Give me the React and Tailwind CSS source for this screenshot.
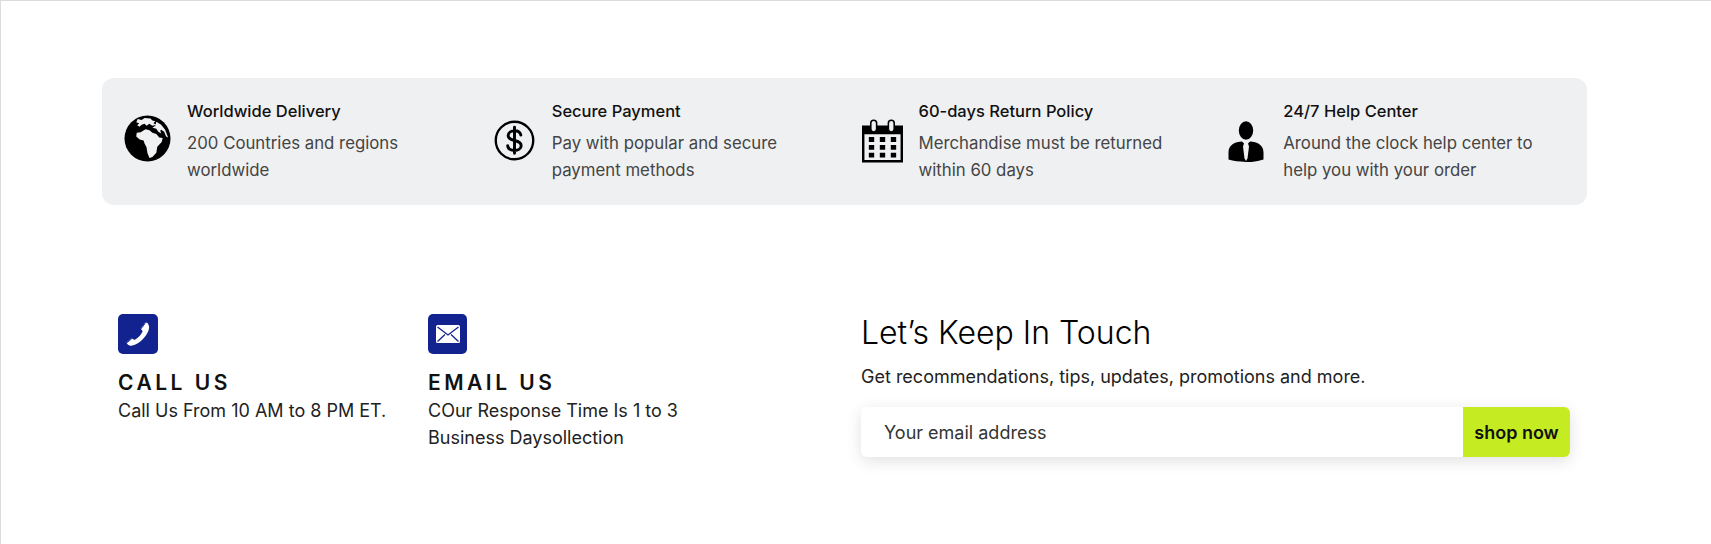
import React from "react";

const Globe = () => (
  <svg viewBox="0 0 48 48" className="w-[47px] h-[47px]">
    <circle cx="24" cy="24" r="23.5" fill="#000" />
    <path fill="#f0f1f3" d="M14 4l4 1 3-2 6 .5 2 2 3 1-2 2 3 1.500-4 1-3-2-3 2-2-2-3 1-2 2-2.500-1.500 2-2-3-1zM33 7l5 3 4 5 3 8-2-1-2-5-3-2-1 1 1 3-3-2-2-3-4-1 3-2z" />
    <path fill="#f0f1f3" d="M17 17.500l5-3 4 1 3 2.500 4 1.500 3 3.500 3.500.5-1 4-4.500 5-1 6-4 4.500-3 1-2-5-1-6-2-4-1-3-4-1-3.500-3 .5-4z" />
  </svg>
);
const Dollar = () => (
  <svg viewBox="0 0 42 42" className="w-[41px] h-[41px]" fill="none" stroke="#000">
    <circle cx="21" cy="21" r="19.200" strokeWidth="2.400" />
    <path strokeWidth="3" strokeLinecap="round" d="M27.500 15.500c-.5-3-3.300-4.500-6.500-4.500-3.500 0-6.500 2-6.500 5 0 3 2.500 4.200 6.500 5 4 .9 6.800 2.200 6.800 5.300 0 3-3 4.900-6.800 4.900-3.500 0-6.500-1.700-7-4.900M21 7.500v26.500" />
  </svg>
);
const Calendar = () => (
  <svg viewBox="0 0 42 44" className="w-[41px] h-[44px]">
    <path fill="#000" d="M0 6h42v38H0z" />
    <path fill="#f0f1f3" d="M2.500 15h37v26.500h-37z" />
    <rect x="9" y="0.800" width="6" height="12" rx="3" fill="#f0f1f3" stroke="#000" strokeWidth="1.600" />
    <rect x="27" y="0.800" width="6" height="12" rx="3" fill="#f0f1f3" stroke="#000" strokeWidth="1.600" />
    <path fill="#000" d="M7 18h5.500v5H7zM18.250 18h5.500v5h-5.500zM29.500 18h5.500v5h-5.500zM7 26h5.500v5H7zM18.250 26h5.500v5h-5.500zM29.500 26h5.500v5h-5.500zM7 34h5.500v5H7zM18.250 34h5.500v5h-5.500zM29.500 34h5.500v5h-5.500z" />
  </svg>
);
const Person = () => (
  <svg viewBox="0 0 36 41" className="w-[36px] h-[41px]">
    <ellipse cx="18" cy="9.500" rx="7.200" ry="9.300" fill="#000" />
    <path fill="#000" d="M14 20.500c-7 .5-13.500 3-13.500 11v7c5 1.500 10.500 2 17.500 2.500s12.500-1 17.500-2.500v-7c0-8-6.500-10.500-13.500-11l-2 2 1 3-1.500 12-1.500 2.500-1.500-2.500-1.500-12 1-3z" />
  </svg>
);
const Phone = () => (
  <svg viewBox="0 0 24 24" className="w-[26px] h-[26px]">
    <path fill="#fff" d="M20.500 1.500c1.800 1.800 2.300 4.500 1.200 7.200-1.200 3-3.300 6.200-6 8.800-2.700 2.700-5.800 4.300-8.800 5.200-2 .5-3.500-.3-5-1.800l-.4-1 4.500-4 1.200.8c.8.7 1.500.8 2.300.3 2.800-1.600 5-4 6.500-6.800.4-.8.2-1.400-.5-2l-1-1 4.200-5.500z" />
    <path stroke="#12238f" strokeWidth=".8" d="M14.500 7.500l4.200-5.400M1.800 20.200l4.700-4.200" />
  </svg>
);
const Mail = () => (
  <svg viewBox="0 0 24 18" className="w-[24px] h-[18px]">
    <rect width="24" height="18" rx="1.500" fill="#fff" />
    <path d="M1.500 2l10.500 8 10.500-8M1.500 16.500l7.500-7M22.500 16.500l-7.500-7" fill="none" stroke="#12238f" strokeWidth="1.300" />
  </svg>
);

const features = [
  { Icon: Globe, top: "mt-0 -ml-px", shift: "", title: "Worldwide Delivery", l1: "200 Countries and regions", l2: "worldwide" },
  { Icon: Dollar, top: "mt-[5px] ml-px", shift: "-ml-px", title: "Secure Payment", l1: "Pay with popular and secure", l2: "payment methods" },
  { Icon: Calendar, top: "mt-[4px] ml-[5px]", shift: "", title: "60-days Return Policy", l1: "Merchandise must be returned", l2: "within 60 days" },
  { Icon: Person, top: "mt-[6px] ml-px", shift: "-ml-px", title: "24/7 Help Center", l1: "Around the clock help center to", l2: "help you with your order" },
];

export default function App() {
  return (
    <div className="h-[544px] border-t border-l border-[#dcdcdc] bg-white [font-family:Inter,sans-serif] overflow-hidden">
      <div className="mt-[77px] ml-[101px] w-[1485px] h-[127px] rounded-xl bg-[#eff0f2] grid grid-cols-4 px-[11px] pt-[21px]">
        {features.map(({ Icon, top, shift, title, l1, l2 }) => (
          <div key={title} className="flex">
            <div className="w-[48px] mt-[16px] mr-[15px] ml-[11px] flex justify-center items-start shrink-0">
              <div className={top}>
                <Icon />
              </div>
            </div>
            <div className={shift}>
              <div className="text-[16.500px] leading-[24px] font-medium text-[#111]">{title}</div>
              <div className="mt-[7px] text-[16.800px] leading-[26.700px] text-[#444]">
                {l1}
                <br />
                {l2}
              </div>
            </div>
          </div>
        ))}
      </div>
      <div className="mt-[109px] ml-[117px] flex">
        <div className="w-[310px]">
          <div className="w-[40px] h-[40px] rounded-[5px] bg-[#12238f] flex items-center justify-center">
            <Phone />
          </div>
          <div className="mt-[15px] text-[21px] leading-[27px] font-semibold tracking-[3.500px] text-[#111]">CALL US</div>
          <div className="mt-[1px] text-[18px] leading-[27px] text-[#222]">Call Us From 10 AM to 8 PM ET.</div>
        </div>
        <div className="w-[433px]">
          <div className="w-[39px] h-[40px] rounded-[5px] bg-[#12238f] flex items-center justify-center">
            <Mail />
          </div>
          <div className="mt-[15px] text-[21px] leading-[27px] font-semibold tracking-[3.500px] text-[#111]">EMAIL US</div>
          <div className="mt-[1px] text-[18px] leading-[27px] text-[#222]">
            COur Response Time Is 1 to 3
            <br />
            Business Daysollection
          </div>
        </div>
        <div className="w-[709px]">
          <div className="-mt-[1px] text-[32px] leading-[40px] font-light text-black">Let’s Keep In Touch</div>
          <div className="mt-[10px] text-[18px] leading-[27px] text-[#222]">Get recommendations, tips, updates, promotions and more.</div>
          <div className="mt-[17px] h-[50px] flex rounded-md shadow-[0_4px_16px_rgba(0,0,0,0.12)] overflow-hidden bg-white">
            <div className="flex-1 pl-[23px] flex items-center text-[18px] text-[#333]">Your email address</div>
            <div className="w-[107px] bg-[#c5ec23] flex items-center justify-center text-[18px] font-semibold text-[#111]">shop now</div>
          </div>
        </div>
      </div>
    </div>
  );
}
